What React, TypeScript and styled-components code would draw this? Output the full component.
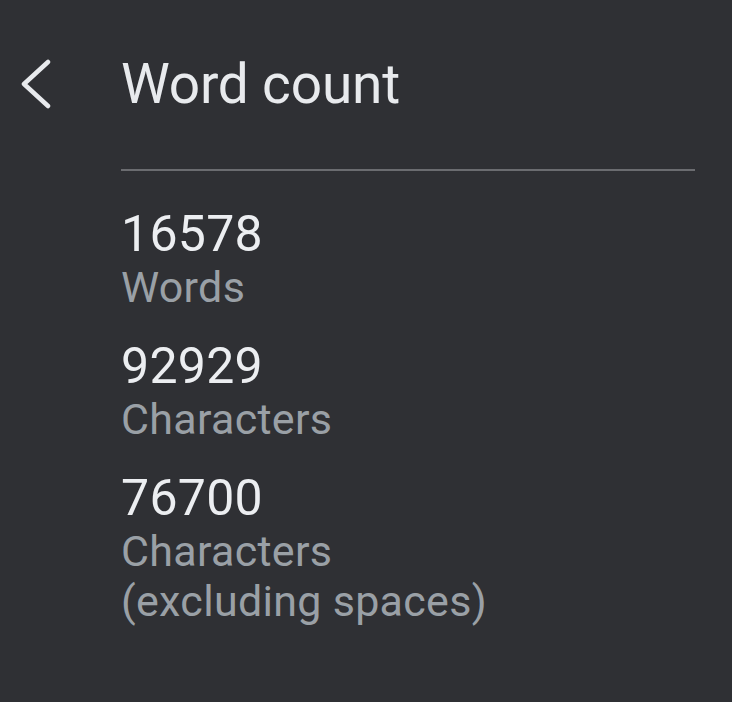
import React from 'react';
import styled, { createGlobalStyle } from 'styled-components';

const GlobalStyle = createGlobalStyle`
  html, body {
    margin: 0;
    padding: 0;
    background: #2f3034;
  }
  body {
    font-family: Roboto, "Liberation Sans", Arial, sans-serif;
    -webkit-font-smoothing: antialiased;
  }
`;

const Page = styled.div`
  width: 732px;
  height: 702px;
  background: #2f3034;
  padding-top: 52px;
  box-sizing: border-box;
`;

const Header = styled.div`
  display: flex;
  align-items: center;
  height: 64px;
`;

const BackButton = styled.button`
  width: 121px;
  height: 64px;
  padding: 0 0 0 18px;
  border: none;
  background: none;
  display: flex;
  align-items: center;
  cursor: pointer;
`;

const Title = styled.h1`
  margin: 0;
  font-family: Roboto, "Liberation Sans", sans-serif;
  font-weight: 400;
  font-size: 55px;
  line-height: 64px;
  color: #e8eaed;
  letter-spacing: -0.2px;
`;

const Divider = styled.hr`
  margin: 53px 37px 0 121px;
  border: none;
  height: 2px;
  background: #6b6c70;
`;

const Stats = styled.div`
  display: flex;
  flex-direction: column;
  gap: 26px;
  padding: 35px 0 0 121px;
`;

const Stat = styled.div`
  display: flex;
  flex-direction: column;
`;

const Value = styled.div`
  font-size: 50px;
  line-height: 56px;
  color: #eceef1;
  letter-spacing: 0.3px;
`;

const Label = styled.div`
  font-size: 43px;
  line-height: 50px;
  color: #9aa0a6;
  letter-spacing: 0.3px;
`;

const stats = [
  { value: '16578', label: 'Words' },
  { value: '92929', label: 'Characters' },
  { value: '76700', label: 'Characters\n(excluding spaces)' },
];

export default function App() {
  return (
    <>
      <GlobalStyle />
      <Page>
        <Header>
          <BackButton aria-label="Back">
            <svg width="34" height="50" viewBox="0 0 34 50">
              <polyline
                points="30,3 6,25 30,47"
                fill="none"
                stroke="#e8eaed"
                strokeWidth="4.5"
                strokeLinecap="round"
                strokeLinejoin="round"
              />
            </svg>
          </BackButton>
          <Title>Word count</Title>
        </Header>
        <Divider />
        <Stats>
          {stats.map((s) => (
            <Stat key={s.value}>
              <Value>{s.value}</Value>
              {s.label.split('\n').map((line) => (
                <Label key={line}>{line}</Label>
              ))}
            </Stat>
          ))}
        </Stats>
      </Page>
    </>
  );
}
